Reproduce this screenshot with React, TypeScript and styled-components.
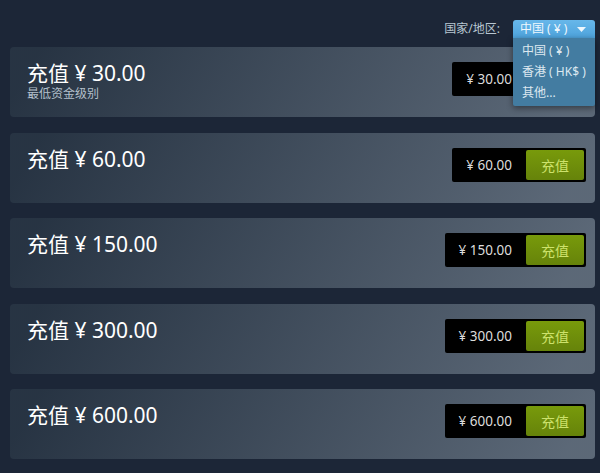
import React from "react";
import styled, { createGlobalStyle } from "styled-components";

const GlobalStyle = createGlobalStyle`
  html, body {
    margin: 0;
    padding: 0;
    background: #1c2637;
  }
  body {
    font-family: "Noto Sans", "Noto Sans CJK SC", sans-serif;
  }
`;

const Page = styled.div`
  width: 600px;
  height: 473px;
  background: #1c2637;
  overflow: hidden;
  position: relative;
`;

const Header = styled.div`
  display: flex;
  justify-content: flex-end;
  align-items: center;
  gap: 13px;
  padding: 20px 5px 0 0;
  height: 18px;
  margin-bottom: 9px;
`;

const Label = styled.span`
  font-size: 12px;
  color: #b8c6d2;
  line-height: 18px;
`;

const Dropdown = styled.div`
  position: relative;
  width: 82px;
`;

const DropButton = styled.div`
  display: flex;
  align-items: center;
  justify-content: space-between;
  height: 18px;
  padding: 0 9px 0 7px;
  border-radius: 3px 3px 0 0;
  background: linear-gradient(to bottom, #67b7ea 0%, #4ea3dc 100%);
  color: #eef7fd;
  font-size: 12px;
  line-height: 18px;
  white-space: pre;
`;

const Menu = styled.div`
  position: absolute;
  top: 18px;
  left: 0;
  right: 0;
  z-index: 5;
  padding: 2px 0 3px;
  background: #437ca1;
  box-shadow: 0 2px 6px rgba(0, 0, 0, 0.45);
  border-radius: 0 0 2px 2px;
`;

const MenuItem = styled.div`
  padding: 0 9px;
  height: 21px;
  line-height: 21px;
  font-size: 12px;
  color: #dce8f0;
  white-space: pre;
`;

const List = styled.div`
  display: flex;
  flex-direction: column;
  gap: 15.5px;
  padding: 0 5px 0 10px;
`;

const Card = styled.div`
  display: flex;
  justify-content: space-between;
  align-items: flex-start;
  height: 70px;
  box-sizing: border-box;
  padding: 15px 9px 0 17px;
  border-radius: 4px;
  background: linear-gradient(
    -60deg,
    rgba(226, 244, 255, 0.32) 5%,
    rgba(84, 107, 115, 0.2) 95%
  );
`;

const Info = styled.div`
  display: flex;
  flex-direction: column;
`;

const Title = styled.div`
  font-size: 21px;
  line-height: 22px;
  color: #ffffff;
`;

const Sub = styled.div`
  font-size: 12px;
  line-height: 14px;
  margin-top: 3px;
  color: #b4c0cc;
`;

const PriceBox = styled.div`
  display: flex;
  align-items: center;
  height: 34px;
  box-sizing: border-box;
  padding: 2px;
  background: #000;
  border-radius: 2px;
`;

const Price = styled.span`
  padding: 0 14px 0 12px;
  font-size: 13.5px;
  color: #dcdcdc;
`;

const AddButton = styled.div`
  width: 58px;
  height: 30px;
  display: flex;
  align-items: center;
  justify-content: center;
  border-radius: 2px;
  background: linear-gradient(to bottom, #789a0b 0%, #66830a 100%);
  color: #cde26c;
  font-size: 14px;
`;

const amounts = ["30.00", "60.00", "150.00", "300.00", "600.00"];

function Arrow() {
  return (
    <svg width="9" height="5" viewBox="0 0 9 5">
      <path d="M0 0 L9 0 L4.5 5 Z" fill="#eef7fd" />
    </svg>
  );
}

export default function App() {
  return (
    <Page>
      <GlobalStyle />
      <Header>
        <Label>国家/地区:</Label>
        <Dropdown>
          <DropButton>
            <span>中国 ( ¥ )</span>
            <Arrow />
          </DropButton>
          <Menu>
            <MenuItem>中国 ( ¥ )</MenuItem>
            <MenuItem>香港 ( HK$ )</MenuItem>
            <MenuItem>其他...</MenuItem>
          </Menu>
        </Dropdown>
      </Header>
      <List>
        {amounts.map((a, i) => (
          <Card key={a}>
            <Info>
              <Title>充值 ¥ {a}</Title>
              {i === 0 && <Sub>最低资金级别</Sub>}
            </Info>
            <PriceBox>
              <Price>¥ {a}</Price>
              <AddButton>充值</AddButton>
            </PriceBox>
          </Card>
        ))}
      </List>
    </Page>
  );
}
